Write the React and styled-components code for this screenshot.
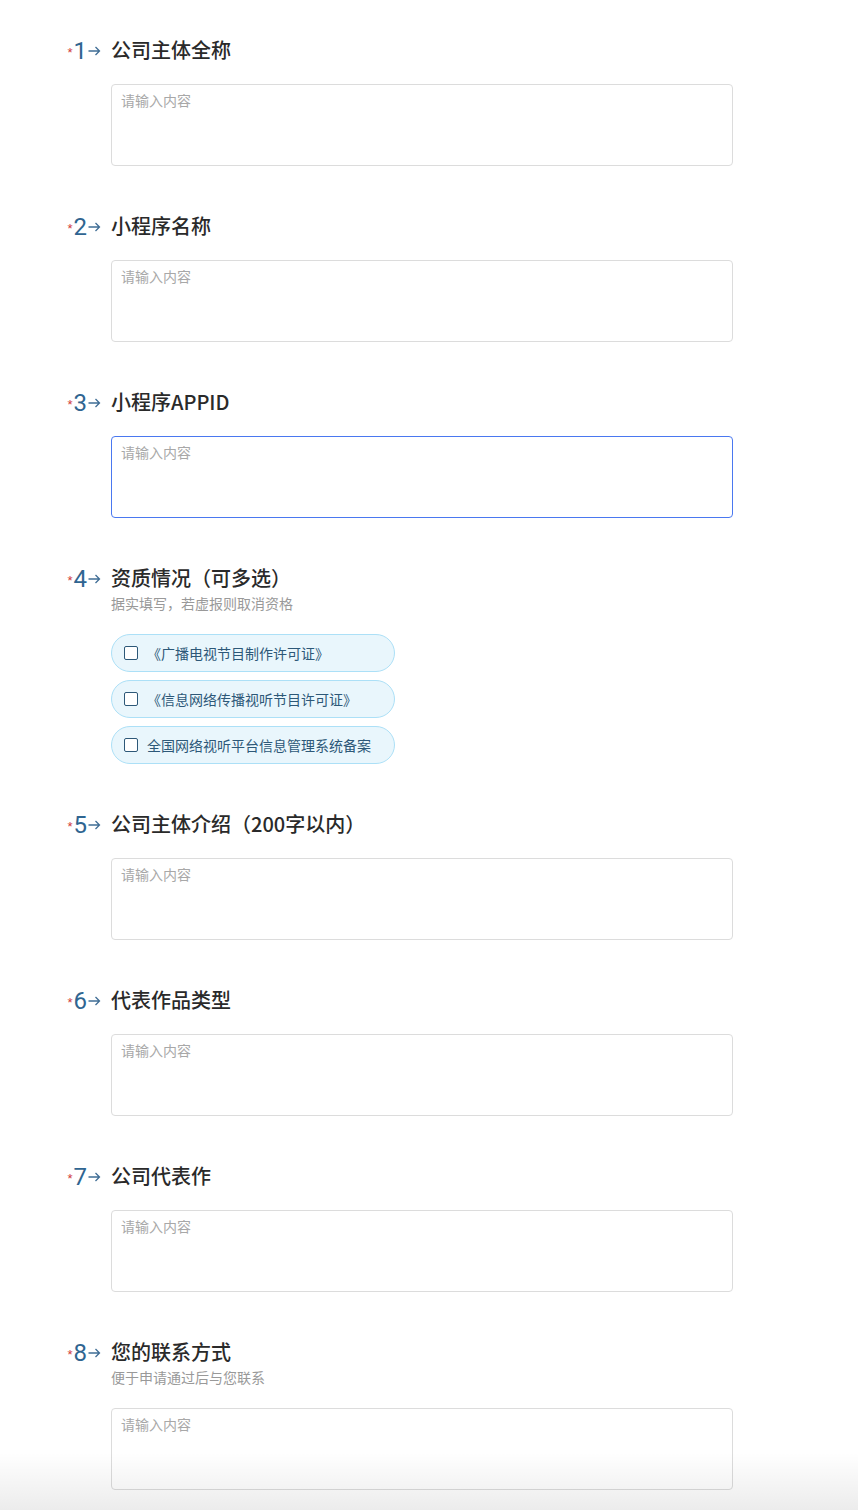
import React from "react";
import styled, { createGlobalStyle } from "styled-components";

const questions = [
  { no: 1, title: "公司主体全称" },
  { no: 2, title: "小程序名称" },
  { no: 3, title: "小程序APPID", focused: true },
  {
    no: 4,
    title: "资质情况（可多选）",
    hint: "据实填写，若虚报则取消资格",
    options: [
      "《广播电视节目制作许可证》",
      "《信息网络传播视听节目许可证》",
      "全国网络视听平台信息管理系统备案",
    ],
  },
  { no: 5, title: "公司主体介绍（200字以内）" },
  { no: 6, title: "代表作品类型" },
  { no: 7, title: "公司代表作" },
  { no: 8, title: "您的联系方式", hint: "便于申请通过后与您联系" },
];

const App = () => {
  return (
    <Page>
      <GlobalStyle />
      <Form>
        {questions.map((q) => (
          <Question key={q.no}>
            <Index>
              <Star>*</Star>
              <Num>{q.no}</Num>
              <svg width="13" height="10" viewBox="0 0 13 10">
                <path
                  d="M0.5 5 H11.5 M7.5 1 L11.5 5 L7.5 9"
                  fill="none"
                  stroke="#3f6d95"
                  strokeWidth="1.3"
                />
              </svg>
            </Index>
            <Body>
              <Head>
                <Title>{q.title}</Title>
                {q.hint && <Hint>{q.hint}</Hint>}
              </Head>
              {q.options ? (
                <Options>
                  {q.options.map((o) => (
                    <Option key={o}>
                      <Box />
                      <span>{o}</span>
                    </Option>
                  ))}
                </Options>
              ) : (
                <Area placeholder="请输入内容" $focused={q.focused} />
              )}
            </Body>
          </Question>
        ))}
      </Form>
      <Fade />
    </Page>
  );
};

export default App;

const GlobalStyle = createGlobalStyle`
  body {
    margin: 0;
    background: #ffffff;
    font-family: "Noto Sans CJK SC", "Noto Sans", sans-serif;
  }
`;

const Page = styled.div`
  width: 858px;
  min-height: 1510px;
  position: relative;
  overflow: hidden;
`;

const Form = styled.div`
  display: flex;
  flex-direction: column;
  gap: 46px;
  padding: 36px 0 20px 0;
`;

const Question = styled.div`
  display: grid;
  grid-template-columns: 101px 622px;
  column-gap: 10px;
`;

const Index = styled.div`
  display: flex;
  justify-content: flex-end;
  align-items: center;
  height: 28px;
  padding-top: 2px;
  box-sizing: border-box;
  color: #2f6591;
`;

const Star = styled.span`
  color: #d03a3a;
  font-family: "Liberation Sans", sans-serif;
  font-size: 13px;
  line-height: 1;
  margin-right: 1px;
  margin-top: 3px;
`;

const Num = styled.span`
  font-family: "Roboto", "Liberation Sans", sans-serif;
  font-size: 24px;
  font-weight: 400;
  line-height: 28px;
  margin-right: 1px;
`;

const Body = styled.div`
  display: flex;
  flex-direction: column;
  gap: 20px;
`;

const Head = styled.div`
  display: flex;
  flex-direction: column;
`;

const Title = styled.div`
  font-size: 20px;
  line-height: 28px;
  font-weight: 500;
  color: #2a2a2a;
`;

const Hint = styled.div`
  font-size: 14px;
  line-height: 22px;
  color: #999999;
`;

const Area = styled.textarea`
  box-sizing: border-box;
  width: 622px;
  height: 82px;
  resize: none;
  border: 1px solid ${(p) => (p.$focused ? "#4a78f0" : "#dcdcdc")};
  border-radius: 4px;
  padding: 5px 9px;
  font-family: "Noto Sans CJK SC", sans-serif;
  font-size: 14px;
  line-height: 20px;
  color: #333;
  outline: none;
  &::placeholder {
    color: #a8a8a8;
  }
`;

const Options = styled.div`
  display: flex;
  flex-direction: column;
  gap: 8px;
`;

const Option = styled.label`
  box-sizing: border-box;
  width: 284px;
  height: 38px;
  display: flex;
  align-items: center;
  gap: 9px;
  padding-left: 12px;
  background: #e9f6fc;
  border: 1px solid #ace0f7;
  border-radius: 19px;
  font-size: 14px;
  color: #2d5878;
`;

const Box = styled.span`
  box-sizing: border-box;
  width: 14px;
  height: 14px;
  border: 1.5px solid #2d5878;
  border-radius: 2px;
  background: #fff;
  flex: none;
`;

const Fade = styled.div`
  position: absolute;
  left: 0;
  right: 0;
  bottom: 0;
  height: 58px;
  background: linear-gradient(
    to bottom,
    rgba(0, 0, 0, 0),
    rgba(0, 0, 0, 0.075)
  );
  pointer-events: none;
`;
